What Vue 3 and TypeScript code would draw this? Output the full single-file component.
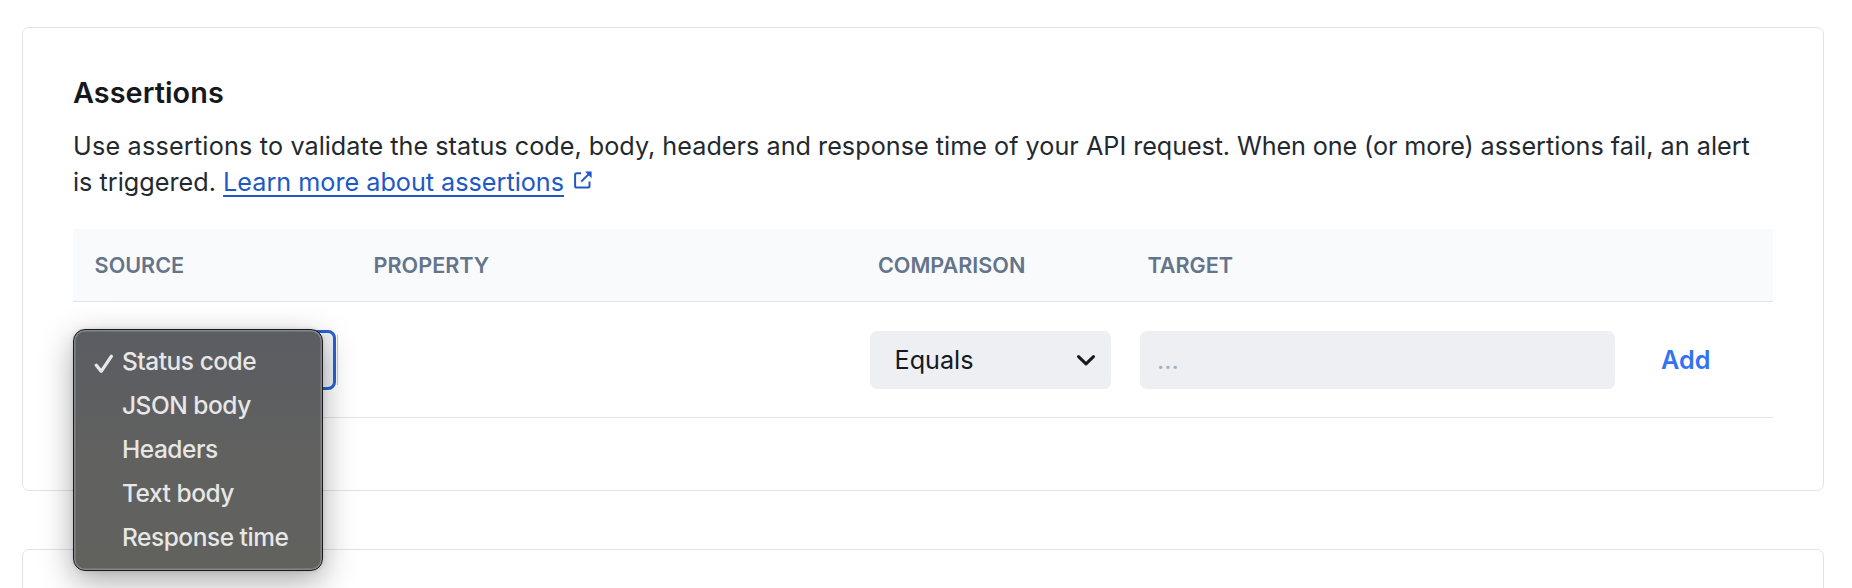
<script setup lang="ts">
import { ref } from 'vue'

const sources = ['Status code', 'JSON body', 'Headers', 'Text body', 'Response time'] as const
const selected = ref<string>('Status code')
const target = ref('')
</script>

<template>
  <main class="page">
    <section class="card">
      <h2 class="title">Assertions</h2>
      <p class="intro">
        <span class="loose">Use assertions to</span> validate the status code, body, headers and
        response time of your API <span class="tight">request. When one (or more)</span> assertions
        fail, an alert <span>is triggered.</span>
        {{ ' ' }}<a class="link" href="#">Learn more about assertions</a>
        <svg class="external" viewBox="0 0 18 18" aria-hidden="true">
          <path class="line" d="M7 2.2H2.8Q1.1 2.2 1.1 3.9V14.9Q1.1 16.6 2.8 16.6H13.8Q15.5 16.6 15.5 14.9V10.4" />
          <path class="line" d="M7.2 10.6L14.6 3.2" />
          <path class="head" d="M11 .4H17.6V7.2Z" />
        </svg>
      </p>

      <div class="table">
        <div class="row head-row">
          <span>Source</span>
          <span>Property</span>
          <span>Comparison</span>
          <span>Target</span>
        </div>
        <div class="row body-row">
          <div class="source">
            <div class="source-select"></div>
            <ul class="menu">
              <li v-for="s in sources" :key="s" class="option" @click="selected = s">
                <svg v-if="s === selected" class="check" viewBox="0 0 20 20" aria-hidden="true">
                  <path d="M2.3 11.2L7.2 17.3L17.3 2.3" />
                </svg>
                {{ s }}
              </li>
            </ul>
          </div>
          <div></div>
          <div class="cell">
            <div class="comparison">
              Equals
              <svg class="chevron" viewBox="0 0 20 12" aria-hidden="true">
                <path d="M2.5 2.6L10 9.8L17.5 2.6" />
              </svg>
            </div>
          </div>
          <div class="cell target-cell">
            <input v-model="target" class="target" type="text" placeholder="..." />
            <button class="add" type="button">Add</button>
          </div>
        </div>
      </div>
    </section>
    <section class="card next"></section>
  </main>
</template>

<style>
body {
  background: #fff;
}
</style>

<style scoped>
.page {
  box-sizing: border-box;
  height: 588px;
  padding: 27px 28px 0 22px;
  overflow: hidden;
  background: #fff;
  color: #23292f;
  font: 400 25.2px/36px Inter, sans-serif;
}
.card {
  box-sizing: border-box;
  height: 464px;
  padding: 47px 50px 0;
  border: 1px solid #e1e3ea;
  border-radius: 7px;
}
.card.next {
  margin-top: 58px;
}
.title {
  margin: 0 0 17px;
  color: #15191e;
  font-size: 28.8px;
  font-weight: 600;
  letter-spacing: 0.08px;
  line-height: 36px;
}
.intro {
  margin: 0 0 29px;
  letter-spacing: 0.02px;
}
.loose {
  letter-spacing: 0.2px;
}
.tight {
  letter-spacing: -0.11px;
}
.link {
  color: #2059c4;
  letter-spacing: 0;
  text-decoration: underline;
  text-decoration-thickness: 2px;
  text-decoration-skip-ink: none;
  text-underline-offset: 4px;
}
.external {
  width: 18px;
  height: 18px;
  margin-left: 10px;
  vertical-align: 2px;
}
.external .line {
  fill: none;
  stroke: #2059c4;
  stroke-width: 2;
}
.external .head {
  fill: #2059c4;
}
.table {
  width: 1700px;
}
.row {
  display: grid;
  grid-template-columns: 279px 503.5px 269.5px 1fr;
  align-items: center;
  border-bottom: 1px solid #e1e3ea;
}
.head-row {
  height: 72px;
  background: #f9fafc;
  color: #64748b;
  font-size: 21.6px;
  font-weight: 600;
  text-transform: uppercase;
}
.head-row span {
  padding-left: 21.6px;
}
.head-row span:nth-child(n + 3) {
  padding-left: 22.4px;
}
.body-row {
  height: 86px;
  padding-top: 29px;
  align-items: start;
}
.cell {
  padding-left: 14.5px;
}
.source {
  position: relative;
}
.source-select {
  box-sizing: border-box;
  width: 258px;
  height: 60px;
  margin: -1px 0 0 5px;
  border: 3px solid #2763d6;
  border-radius: 8px;
  background: #f2f3f7;
}
/* Thin outer edge of the focus ring */
.source-select::after {
  content: '';
  position: absolute;
  top: 4px;
  left: 264px;
  width: 1px;
  height: 50px;
  background: #b9c9ee;
}
.menu {
  position: absolute;
  top: -2px;
  left: 0;
  box-sizing: border-box;
  width: 250px;
  height: 242px;
  margin: 0;
  padding: 9px 0 0 48px;
  border: 1px solid #17191b;
  border-radius: 12px;
  background: linear-gradient(#5a5d62, #5d5e61 25%, #616160 50%, #61615e);
  box-shadow:
    inset 0 0 0 1.5px #85878a,
    0 0 4px rgba(0, 0, 0, 0.12),
    0 10px 32px rgba(0, 0, 0, 0.34);
  color: #e7e7e7;
  font-size: 24.5px;
  font-weight: 500;
  letter-spacing: -0.48px;
  line-height: 44px;
  list-style: none;
}
.option {
  position: relative;
  height: 44px;
}
.check {
  position: absolute;
  top: 15px;
  left: -28px;
  width: 20px;
  height: 20px;
}
.check path {
  fill: none;
  stroke: #e7e7e7;
  stroke-width: 3.3;
  stroke-linecap: round;
  stroke-linejoin: round;
}
.comparison {
  box-sizing: border-box;
  display: flex;
  align-items: center;
  justify-content: space-between;
  width: 241px;
  height: 58px;
  padding: 0 15px 0 24.5px;
  border-radius: 7px;
  background: #eeeff3;
  color: #15191e;
}
.chevron {
  width: 20px;
  height: 12px;
}
.chevron path {
  fill: none;
  stroke: #15191e;
  stroke-width: 3;
  stroke-linecap: round;
  stroke-linejoin: round;
}
.target-cell {
  display: flex;
  align-items: center;
  padding-left: 15px;
}
.target {
  box-sizing: border-box;
  width: 475px;
  height: 58px;
  padding: 0 17px;
  border: 0;
  border-radius: 7px;
  outline: 0;
  background: #eeeff3;
  color: #15191e;
  font: inherit;
}
.target::placeholder {
  color: #a3b1c4;
  opacity: 1;
}
.add {
  margin-left: 46px;
  padding: 0;
  border: 0;
  background: none;
  color: #3273f6;
  font: inherit;
  font-weight: 600;
}
</style>
